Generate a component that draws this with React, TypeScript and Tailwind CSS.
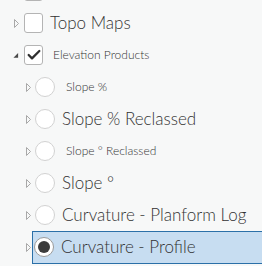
import { Check } from 'lucide-react'

type Item = {
  label: string
  level: 0 | 1
  kind: 'check' | 'radio'
  size: string
  checked?: boolean
  expanded?: boolean
  selected?: boolean
  pad?: string
}

const items: Item[] = [
  { label: 'Topo Maps', level: 0, kind: 'check', size: 'text-[17px]', pad: 'pl-[7px]' },
  { label: 'Elevation Products', level: 0, kind: 'check', size: 'text-[12px]', checked: true, expanded: true, pad: 'pl-[10px]' },
  { label: 'Slope %', level: 1, kind: 'radio', size: 'text-[12px]', pad: 'pl-[11px]' },
  { label: 'Slope % Reclassed', level: 1, kind: 'radio', size: 'text-[17px]', pad: 'pl-[7px]' },
  { label: 'Slope ° Reclassed', level: 1, kind: 'radio', size: 'text-[12px]', pad: 'pl-[11px]' },
  { label: 'Slope °', level: 1, kind: 'radio', size: 'text-[17px]', pad: 'pl-[7px]' },
  { label: 'Curvature - Planform Log', level: 1, kind: 'radio', size: 'text-[17px]', pad: 'pl-[7px]' },
  { label: 'Curvature - Profile', level: 1, kind: 'radio', size: 'text-[17px]', checked: true, selected: true, pad: 'pl-[7px]' },
]

const Arrow = ({ expanded }: { expanded?: boolean }) =>
  expanded ? (
    <svg width="7" height="7" viewBox="0 0 7 7">
      <path d="M6 0.5 L6 6 L0.5 6 Z" fill="#4a4a4a" />
    </svg>
  ) : (
    <svg width="5" height="9" viewBox="0 0 5 9">
      <path d="M0.5 0.5 L4.5 4.5 L0.5 8.5 Z" fill="none" stroke="#a8a8a8" strokeWidth="1" />
    </svg>
  )

const CheckBox = ({ checked }: { checked?: boolean }) => (
  <div className="w-[19px] h-[20px] rounded-[3px] border border-[#b4b4b4] bg-white flex items-center justify-center shrink-0">
    {checked && <Check size={16} strokeWidth={3.4} className="text-[#2f2f2f]" />}
  </div>
)

const Radio = ({ checked }: { checked?: boolean }) => (
  <div
    className={`w-[20px] h-[20px] rounded-full border bg-white flex items-center justify-center shrink-0 ${
      checked ? 'border-[#9a9a9a]' : 'border-[#d2d2d2]'
    }`}
  >
    {checked && <div className="w-[12px] h-[12px] rounded-full bg-[#3c3c3c]" />}
  </div>
)

const Row = ({ item }: { item: Item }) => {
  const indent = item.level === 0 ? 'pl-[13px]' : 'pl-[25px]'
  const gap = item.level === 0 ? 'ml-[5px]' : 'ml-[4px]'
  return (
    <div className={`h-[32px] flex items-center ${indent}`}>
      <div className="w-[6px] flex items-center justify-center">
        <Arrow expanded={item.expanded} />
      </div>
      {item.selected ? (
        <div className="ml-[1px] flex-1 h-[33px] flex items-center pl-[1px] bg-[#c7ddf1] border border-r-0 border-[#2b70a8]">
          <Radio checked />
          <span className={`${item.pad} ${item.size} font-light text-[#333333] whitespace-nowrap`}>{item.label}</span>
        </div>
      ) : (
        <div className={`${gap} flex items-center`}>
          {item.kind === 'check' ? <CheckBox checked={item.checked} /> : <Radio checked={item.checked} />}
          <span className={`${item.pad} ${item.size} font-light text-[#333333] whitespace-nowrap`}>{item.label}</span>
        </div>
      )}
    </div>
  )
}

export default function App() {
  return (
    <div
      className="w-[262px] h-[266px] overflow-hidden bg-[#f7f8f8]"
      style={{ fontFamily: 'Lato, sans-serif' }}
    >
      <div className="-mt-[25px]">
        <div className="h-[32px] flex items-center pl-[13px]">
          <div className="w-[6px]" />
          <div className="ml-[5px]">
            <CheckBox />
          </div>
        </div>
        {items.map((item) => (
          <Row key={item.label} item={item} />
        ))}
      </div>
    </div>
  )
}
